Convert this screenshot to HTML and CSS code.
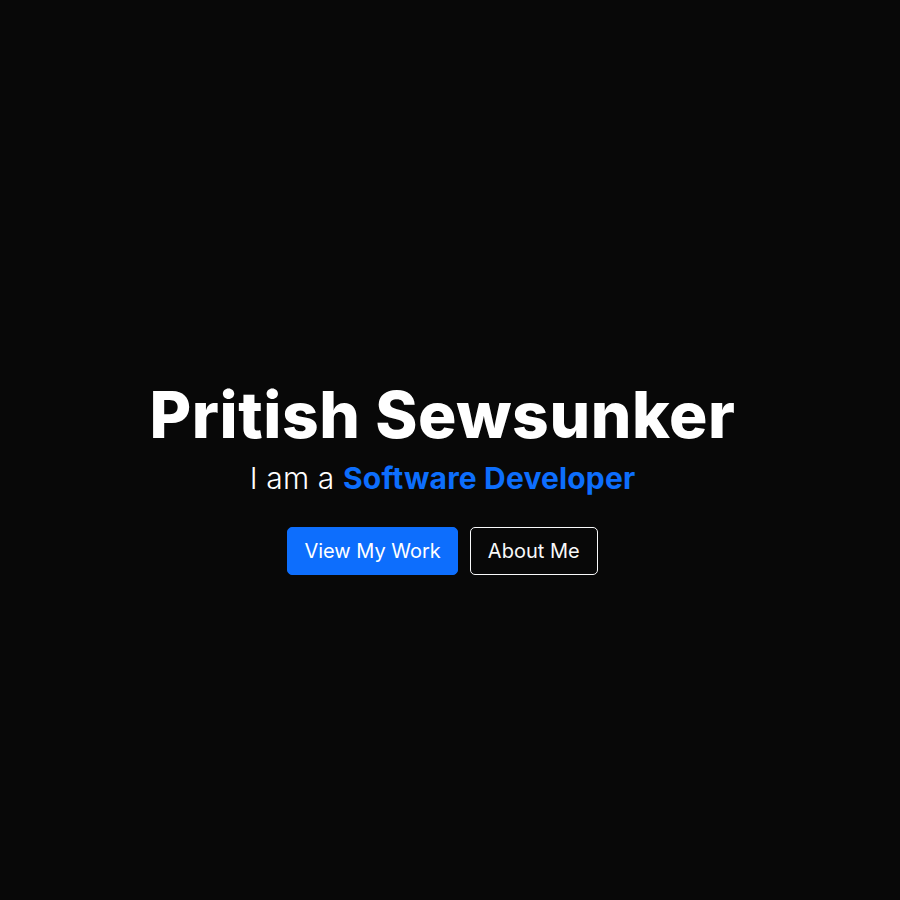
FILE: index.html
```html
<!DOCTYPE html>
<html lang="en">
<head>
<meta charset="utf-8">
<title>Pritish Sewsunker</title>
<link rel="stylesheet" href="styles.css">
</head>
<body>
<main class="hero">
  <h1 class="hero-title">Pritish Sewsunker</h1>
  <p class="hero-sub">I am a <span class="accent">Software Developer</span></p>
  <div class="hero-actions">
    <a class="btn btn-primary" href="#work">View My Work</a>
    <a class="btn btn-outline" href="#about">About Me</a>
  </div>
</main>
</body>
</html>
```
FILE: styles.css
```css
* { box-sizing: border-box; }
html, body { margin: 0; padding: 0; }
body {
  background: #080808;
  color: #fff;
  font-family: Inter, "Noto Sans", sans-serif;
}
.hero {
  height: 900px;
  display: flex;
  flex-direction: column;
  align-items: center;
  justify-content: center;
  text-align: center;
  padding: 52px 15px 0 0;
}
.hero-title {
  margin: 0;
  font-size: 64px;
  font-weight: 800;
  line-height: 1.2;
  letter-spacing: 0.6px;
}
.hero-sub {
  margin: 6px 0 0;
  font-size: 30px;
  font-weight: 300;
  line-height: 1.2;
  letter-spacing: 0.15px;
}
.accent { color: #0d6efd; font-weight: 700; }
.hero-actions {
  display: flex;
  gap: 12px;
  margin-top: 31px;
}
.btn {
  display: inline-block;
  padding: 8px 16px;
  font-size: 20px;
  line-height: 30px;
  border: 1px solid transparent;
  border-radius: 5px;
  color: #fff;
  text-decoration: none;
}
.btn-primary { background: #0d6efd; border-color: #0d6efd; }
.btn-outline { border-color: #f8f9fa; color: #f8f9fa; padding: 8px 17px; }
```
